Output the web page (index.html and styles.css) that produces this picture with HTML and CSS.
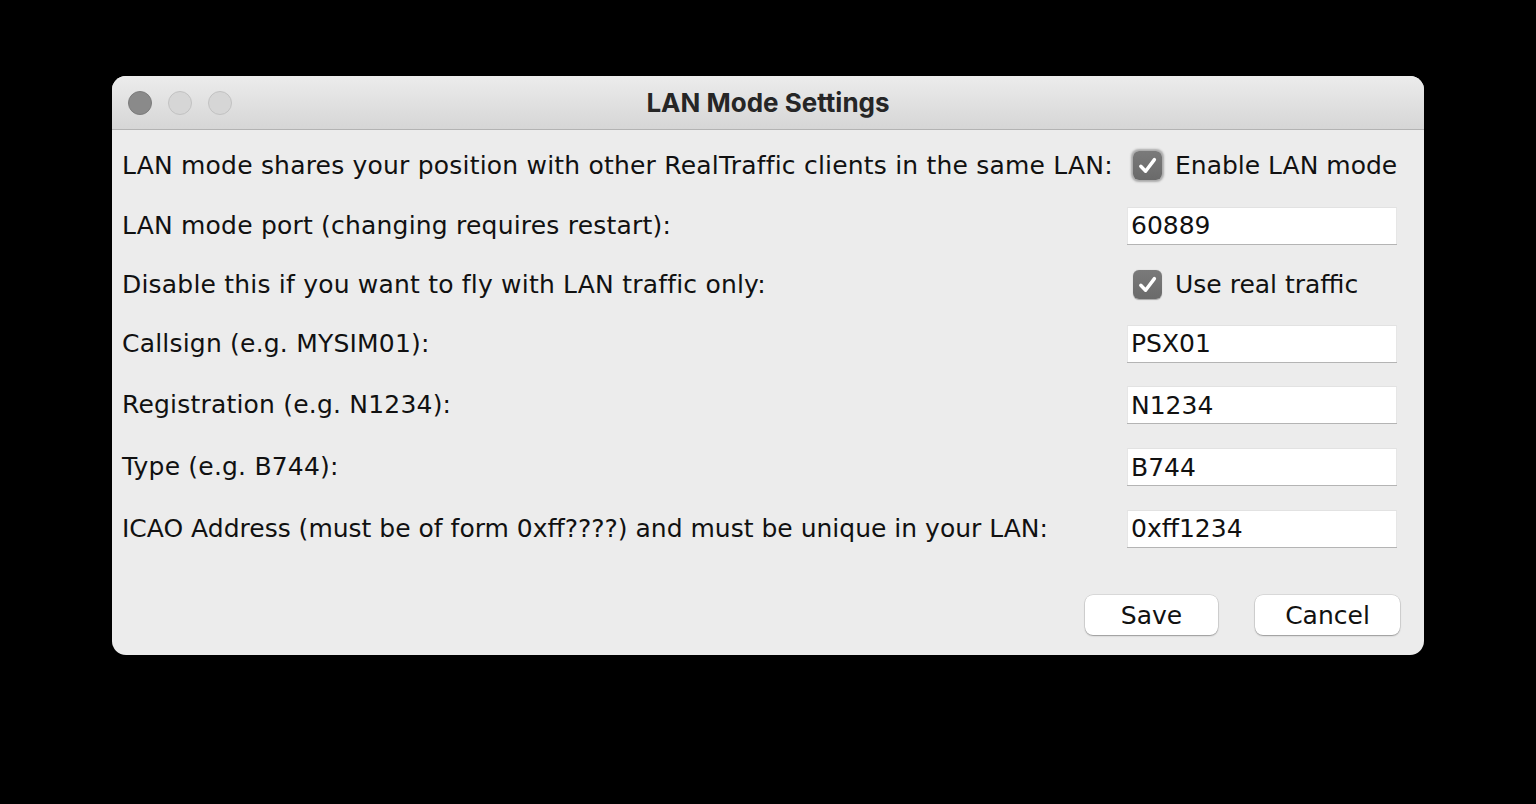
FILE: index.html
```html
<!DOCTYPE html>
<html>
<head>
<meta charset="utf-8">
<link rel="stylesheet" href="styles.css">
</head>
<body>
<div class="window">
  <div class="titlebar">
    <div class="lights">
      <span class="light close"></span>
      <span class="light"></span>
      <span class="light"></span>
    </div>
    <div class="title">LAN Mode Settings</div>
  </div>
  <div class="content">
    <div class="form">
      <div class="label r1">LAN mode shares your position with other RealTraffic clients in the same LAN:</div>
      <div class="ctl r1"><label class="check"><span class="box focus"><svg viewBox="0 0 29 29"><path d="M7.8 15.2 L12.6 20.2 L21.4 8.6" fill="none" stroke="#fff" stroke-width="3.4" stroke-linecap="round" stroke-linejoin="round"/></svg></span><span>Enable LAN mode</span></label></div>

      <div class="label r2">LAN mode port (changing requires restart):</div>
      <div class="ctl r2"><div class="field">60889</div></div>

      <div class="label r3">Disable this if you want to fly with LAN traffic only:</div>
      <div class="ctl r3"><label class="check"><span class="box"><svg viewBox="0 0 29 29"><path d="M7.8 15.2 L12.6 20.2 L21.4 8.6" fill="none" stroke="#fff" stroke-width="3.4" stroke-linecap="round" stroke-linejoin="round"/></svg></span><span>Use real traffic</span></label></div>

      <div class="label r4">Callsign (e.g. MYSIM01):</div>
      <div class="ctl r4"><div class="field">PSX01</div></div>

      <div class="label r5">Registration (e.g. N1234):</div>
      <div class="ctl r5"><div class="field">N1234</div></div>

      <div class="label r6">Type (e.g. B744):</div>
      <div class="ctl r6"><div class="field">B744</div></div>

      <div class="label r7 tight">ICAO Address (must be of form 0xff????) and must be unique in your LAN:</div>
      <div class="ctl r7"><div class="field">0xff1234</div></div>
    </div>
    <div class="buttons">
      <button class="btn save">Save</button>
      <button class="btn cancel">Cancel</button>
    </div>
  </div>
</div>
</body>
</html>
```
FILE: styles.css
```css
html, body {
  margin: 0;
  padding: 0;
  background: #000;
}
body {
  width: 1536px;
  height: 804px;
  padding: 76px 0 0 112px;
  box-sizing: border-box;
  font-family: "DejaVu Sans", "Liberation Sans", sans-serif;
}
.window {
  width: 1312px;
  height: 579px;
  background: #ececec;
  border-radius: 14px;
  overflow: hidden;
  display: flex;
  flex-direction: column;
}
.titlebar {
  height: 53px;
  flex: none;
  background: linear-gradient(#ececec, #d6d6d6);
  border-bottom: 1px solid #b3b3b3;
  display: flex;
  align-items: center;
  position: relative;
}
.lights {
  display: flex;
  gap: 16px;
  padding-left: 16px;
}
.light {
  width: 22px;
  height: 22px;
  border-radius: 50%;
  background: #d6d6d6;
  border: 1px solid #c2c2c2;
}
.light.close {
  background: #8a8a8a;
  border-color: #7c7c7c;
}
.title {
  position: absolute;
  left: 0;
  right: 0;
  top: 0;
  bottom: 0;
  display: flex;
  align-items: center;
  justify-content: center;
  font-family: "Inter", "Liberation Sans", sans-serif;
  font-weight: 700;
  font-size: 26px;
  color: #262626;
  padding-bottom: 1px;
}
.content {
  flex: 1;
  display: flex;
  flex-direction: column;
  padding: 5px 24px 20px 10px;
}
.form {
  display: grid;
  grid-template-columns: 1fr 270px;
  grid-template-rows: 60px 60px 58px 60px 63px 61px 62px;
  padding-right: 3px;
}
.label {
  display: flex;
  align-items: center;
  font-size: 25px;
  letter-spacing: 0.2px;
  color: #111;
  white-space: nowrap;
}
.label.tight {
  letter-spacing: 0;
}
.ctl {
  display: flex;
  align-items: center;
}
.field {
  width: 100%;
  height: 37px;
  box-sizing: border-box;
  background: #fff;
  border-top: 1px solid #e2e2e2;
  border-left: 1px solid #e6e6e6;
  border-right: 1px solid #e6e6e6;
  box-shadow: 0 1px 0 #b4b4b4;
  font-size: 25px;
  color: #111;
  display: flex;
  align-items: center;
  padding-left: 3px;
}
.check {
  display: flex;
  align-items: center;
  gap: 13px;
  padding-left: 6px;
  font-size: 25px;
  color: #111;
  white-space: nowrap;
}
.box {
  width: 29px;
  height: 29px;
  border-radius: 6px;
  background: linear-gradient(#7a7a7a, #6a6a6a);
  display: flex;
  align-items: center;
  justify-content: center;
  box-shadow: 0 0.5px 1px rgba(0,0,0,0.3);
}
.box svg {
  width: 29px;
  height: 29px;
  display: block;
}
.box.focus {
  box-shadow: 0 0 2px 2px rgba(90,90,90,0.45);
}
.buttons {
  margin-top: auto;
  display: flex;
  justify-content: flex-end;
  gap: 37px;
}
.btn {
  height: 40px;
  background: #fff;
  border: none;
  border-radius: 8px;
  box-shadow: 0 0 0 0.5px rgba(0,0,0,0.15), 0 1px 1.5px rgba(0,0,0,0.3);
  font-family: "DejaVu Sans", "Liberation Sans", sans-serif;
  font-size: 25px;
  color: #111;
  padding: 0;
}
.btn.save { width: 133px; }
.btn.cancel { width: 145px; }
```
